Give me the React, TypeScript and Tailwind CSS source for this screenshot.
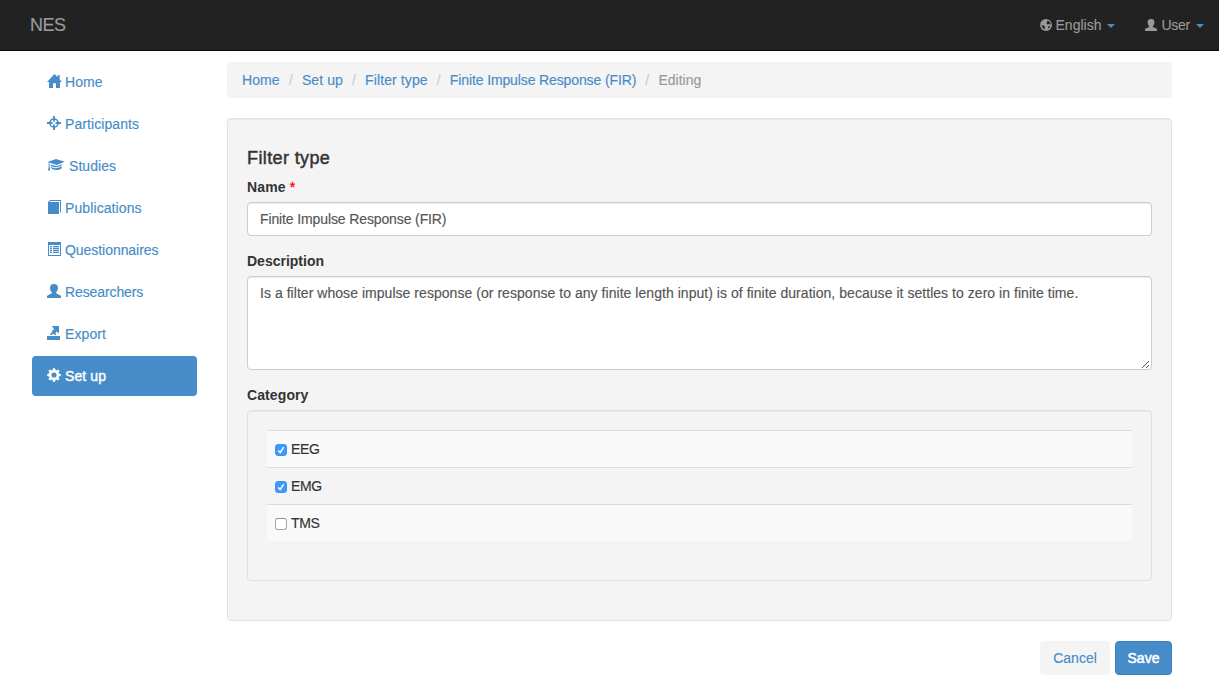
import React from "react";

type IconProps = { children: React.ReactNode; wide?: boolean; className?: string };

function Glyph({ children, wide = false, className = "" }: IconProps) {
  return (
    <svg
      viewBox={wide ? "0 0 18 14" : "0 0 14 14"}
      className={`${wide ? "w-[18px]" : "w-[14px]"} h-[14px] shrink-0 overflow-visible fill-current ${className}`}
      aria-hidden="true"
    >
      {children}
    </svg>
  );
}

const userPath =
  "M7 0C4.400 0 3 1.400 3 3.700c0 1.800.6 3.400 1.700 4.400.4.500.3 1.200-.3 1.500L1.500 10.900C.5 11.300 0 11.800 0 12.700V14h14v-1.300c0-.9-.5-1.400-1.500-1.800L9.600 9.600c-.6-.3-.7-1-.3-1.500 1.100-1 1.700-2.600 1.700-4.400C11 1.400 9.600 0 7 0z";

function Home() {
  return <Glyph><path d="M7.500 0 15 8H13V14H9V9.200H6V14H2V8H0zM10.500 1.200h2.200v4.200l-2.200-2.200z" /></Glyph>;
}
function Target() {
  return (
    <Glyph>
      <path d="M6.100 0h1.800v5.500H6.100zM6.100 8.500h1.800V14H6.100zM0 6.100h5.500v1.800H0zM8.500 6.100H14v1.800H8.500z" />
      <circle cx="7" cy="7" r="4.100" fill="none" stroke="currentColor" strokeWidth="1.500" />
    </Glyph>
  );
}
function Cap() {
  return (
    <Glyph wide>
      <path d="M.4 4 9 1l8.800 2.700L9.700 7zM3.700 6.400l6 1.800 5.100-2v.9c-2 2.200-7.200 3-10.200 1.200l-.9-.7zM3.700 9.100c3 1.700 8 1.500 11-1v2.100c-1.500 1.300-3.300 1.800-5.300 1.800-2.200 0-4.200-.7-5.700-2.200zM1.700 4.900l1 .3v3.600l.5 3.800H1l.7-3.800z" />
    </Glyph>
  );
}
function Book() {
  return <Glyph><path d="M3 0h11v12.500h-1V1H3.200l-1 1H12v12H1V2z" /></Glyph>;
}
function ListIcon() {
  return (
    <Glyph>
      <path fillRule="evenodd" d="M1 0h13v14H1zM2 3v10h11V3z" />
      <path d="M3 4h2v1H3zM6 4h6v1H6zM3 6h2v1H3zM6 6h6v1H6zM3 8h2v1H3zM6 8h6v1H6zM3 10h2v1H3zM6 10h6v1H6z" />
      <path d="M3 5h2v6H3zM6 5h6v6H6z" opacity=".35" />
    </Glyph>
  );
}
function UserIcon({ className }: { className?: string }) {
  return <Glyph className={className}><path d={userPath} /></Glyph>;
}
function ExportIcon() {
  return <Glyph><path d="M0 10h13v4H0zM4.500 0H12v7.600L9.800 5.600 8.300 7.300 9.500 8.500 8.300 9.200 6.200 7.700 4.800 9 2.800 8.200 4 6.800 5.600 6.500 4.600 5.200 6.500 4 6.700 2z" /></Glyph>;
}
function Gear() {
  return (
    <Glyph>
      <path fillRule="evenodd" d="M5.900.2h2.200l.4 1.900 1 .4 1.600-1.100 1.500 1.500-1.100 1.600.4 1 1.900.4v2.200l-1.900.4-.4 1 1.100 1.600-1.500 1.500-1.600-1.100-1 .4-.4 1.900H5.900l-.4-1.900-1-.4-1.600 1.100-1.500-1.500 1.100-1.600-.4-1-1.900-.4V5.900l1.900-.4.4-1-1.100-1.600 1.500-1.500 1.600 1.100 1-.4zM7 4.400a2.600 2.600 0 1 0 0 5.200 2.600 2.600 0 0 0 0-5.200z" />
    </Glyph>
  );
}
function Globe() {
  return (
    <svg viewBox="0 0 14 14" className="h-3 w-3 shrink-0" aria-hidden="true">
      <circle cx="7" cy="7" r="6.900" fill="#999" />
      <path d="M8 1.800 10.700 2.500 12.200 4.800 12.300 6.500 10.500 5.700 9 6.400 7.400 5 8.700 3.600zM1.700 7.200l2 .3 2.300 1.300-.6 1.600.6 1.700L3.700 11z M10 8.300l1.700-.2-.7 2-1.800 1.200z" fill="#222" />
    </svg>
  );
}
function Caret() {
  return <span className="mt-px h-0 w-0 border-x-4 border-t-4 border-x-transparent border-t-[#468cc8]" />;
}

const nav = [
  { label: "Home", icon: <Home />, tracking: "tracking-[0.1px]" },
  { label: "Participants", icon: <Target />, tracking: "tracking-[0.08px]" },
  { label: "Studies", icon: <Cap />, tracking: "tracking-[0.05px]" },
  { label: "Publications", icon: <Book />, tracking: "tracking-[0.1px]" },
  { label: "Questionnaires", icon: <ListIcon />, tracking: "tracking-[-0.05px]" },
  { label: "Researchers", icon: <UserIcon />, tracking: "tracking-[-0.1px]" },
  { label: "Export", icon: <ExportIcon />, tracking: "tracking-[0.1px]" },
  { label: "Set up", icon: <Gear />, tracking: "tracking-[0.1px]", active: true },
];

const crumbs = [
  { label: "Home", tracking: "tracking-[0.1px]" },
  { label: "Set up", tracking: "tracking-[0.08px]" },
  { label: "Filter type", tracking: "tracking-[0.1px]" },
  { label: "Finite Impulse Response (FIR)", tracking: "tracking-[-0.12px]" },
];

const categories = [
  { name: "EEG", checked: true },
  { name: "EMG", checked: true },
  { name: "TMS", checked: false },
];

function Check({ checked }: { checked: boolean }) {
  return (
    <span
      className={`mt-[2px] flex h-3 w-3 items-center justify-center rounded-[3px] border ${
        checked ? "border-[#3b93f5] bg-[#3f99fb]" : "border-[#a8a8a8] border-t-[#929292] bg-white"
      }`}
    >
      {checked && (
        <svg viewBox="0 0 10 10" className="h-[10px] w-[10px] shrink-0" aria-hidden="true">
          <path d="M2.200 5.400 4.200 7.500 7.700 2.200" fill="none" stroke="white" strokeWidth="1.500" />
        </svg>
      )}
    </span>
  );
}

export default function App() {
  return (
    <div className="flex h-[680px] w-[1219px] flex-col overflow-hidden bg-white font-['Liberation_Sans',Arial,sans-serif] text-[14px] leading-5 text-[#333]">
      <header className="flex h-[51px] shrink-0 items-center justify-between border-b border-[#080808] bg-[#222] pl-[30px] pr-[15px] text-[#999]">
        <span className="text-[18px] tracking-[-0.5px] [-webkit-text-stroke:0.2px_#999]">NES</span>
        <div className="flex items-center">
          <div className="flex items-center">
            <Globe />
            <span className="ml-1 mr-[6px] [-webkit-text-stroke:0.15px_#999]">English</span>
            <Caret />
          </div>
          <div className="ml-[30px] flex items-center">
            <UserIcon className="h-[12px]! w-[12px]!" />
            <span className="ml-1 mr-[6px] tracking-[-0.25px] [-webkit-text-stroke:0.15px_#999]">User</span>
            <Caret />
          </div>
        </div>
      </header>

      <div className="flex [-webkit-text-stroke:0.15px]">
        <nav className="ml-8 mt-[11px] flex w-[165px] shrink-0 flex-col gap-[2px]">
          {nav.map((item) => (
            <a
              key={item.label}
              className={`flex h-10 items-center gap-1 rounded-[4px] pl-[15px] ${
                item.active ? "bg-[#468cc8] text-white [-webkit-text-stroke:0.4px_white]" : "text-[#468cc8]"
              }`}
            >
              <span className="-mt-[2px] [-webkit-text-stroke:0]">{item.icon}</span>
              <span className={item.tracking}>{item.label}</span>
            </a>
          ))}
        </nav>

        <main className="ml-[30px] mt-[11px] flex w-[945px] flex-col">
          <div className="flex h-9 items-center rounded-[4px] bg-[#f4f4f4] px-[15px]">
            {crumbs.map((crumb) => (
              <React.Fragment key={crumb.label}>
                <a className={`text-[#468cc8] ${crumb.tracking}`}>{crumb.label}</a>
                <span className="w-[22.2px] text-center text-[#ccc]">/</span>
              </React.Fragment>
            ))}
            <span className="text-[#999]">Editing</span>
          </div>

          <section className="mt-5 flex h-[503px] flex-col rounded-[4px] border border-[#e2e2e2] bg-[#f4f4f4] px-[19px] pt-[29px] shadow-[inset_0_1px_1px_rgba(0,0,0,0.05)]">
            <h4 className="text-[18px] leading-5 tracking-[0.38px] [-webkit-text-stroke:0.45px_#333]">Filter type</h4>
            <div className="mt-[9px] h-5 font-bold [-webkit-text-stroke:0]">
              <span className="tracking-[0.15px]">Name</span> <span className="font-normal text-[#f00] [-webkit-text-stroke:0.3px_#f00]">*</span>
            </div>
            <div className="mt-[5px] flex h-[34px] items-center rounded-[4px] border border-[#ccc] bg-white px-3 tracking-[-0.12px] text-[#555] shadow-[inset_0_1px_1px_rgba(0,0,0,0.075)]">
              Finite Impulse Response (FIR)
            </div>
            <div className="mt-[15px] h-5 font-bold [-webkit-text-stroke:0]">Description</div>
            <div className="mt-[5px] flex h-[94px] justify-between rounded-[4px] border border-[#ccc] bg-white pl-3 pt-[6px] text-[#555] shadow-[inset_0_1px_1px_rgba(0,0,0,0.075)]">
              <p className="whitespace-nowrap tracking-[0.042px]">
                Is a filter whose impulse response (or response to any finite length input) is of finite duration, because it settles to zero in finite time.
              </p>
              <svg viewBox="0 0 9 9" className="mr-px h-[9px] w-[9px] self-end" aria-hidden="true">
                <path d="M1 8 8 1M5 8 8 5" stroke="#555" strokeWidth="1" fill="none" />
              </svg>
            </div>
            <div className="mt-[15px] h-5 font-bold tracking-[0.1px] [-webkit-text-stroke:0]">Category</div>
            <div className="mt-[5px] h-[171px] rounded-[4px] border border-[#e0e0e0] px-[19px] pt-[19px] shadow-[inset_0_1px_1px_rgba(0,0,0,0.05)]">
              {categories.map((category) => (
                <div key={category.name} className="flex h-[37px] items-center gap-1 border-t border-[#ddd] px-2 odd:bg-[#f9f9f9]">
                  <Check checked={category.checked} />
                  <span className="tracking-[-0.4px]">{category.name}</span>
                </div>
              ))}
            </div>
          </section>

          <div className="mt-5 flex justify-end gap-[5px]">
            <button className="h-[34px] w-[70px] rounded-[4px] bg-[#f4f4f4] text-[#468cc8]">Cancel</button>
            <button className="h-[34px] w-[57px] rounded-[4px] border border-[#3a7fbb] bg-[#468cc8] text-white [-webkit-text-stroke:0.5px_white]">Save</button>
          </div>
        </main>
      </div>
    </div>
  );
}
